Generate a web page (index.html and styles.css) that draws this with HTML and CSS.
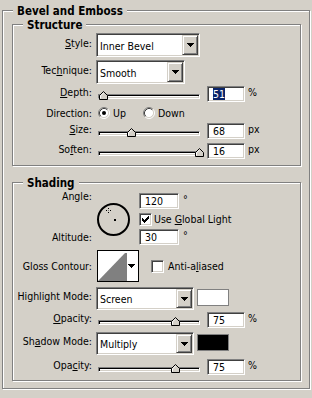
FILE: index.html
```html
<!DOCTYPE html>
<html>
<head>
<meta charset="utf-8">
<link rel="stylesheet" href="styles.css">
</head>
<body>
<div class="group outer">
  <div class="gtitle">Bevel and Emboss</div>

  <div class="group inner structure">
    <div class="gtitle">Structure</div>

    <div class="row r-style">
      <span class="lbl lbl-sel"><u>S</u>tyle:</span>
      <div class="select sel-style">
        <span class="val val-big">Inner Bevel</span>
        <span class="btn"><svg width="7" height="4" viewBox="0 0 7 4"><path d="M0 0h7v1H0zM1 1h5v1H1zM2 2h3v1H2zM3 3h1v1H3z"/></svg></span>
      </div>
    </div>

    <div class="row r-tech">
      <span class="lbl lbl-sel">Tec<u>h</u>nique:</span>
      <div class="select sel-tech">
        <span class="val val-big">Smooth</span>
        <span class="btn"><svg width="7" height="4" viewBox="0 0 7 4"><path d="M0 0h7v1H0zM1 1h5v1H1zM2 2h3v1H2zM3 3h1v1H3z"/></svg></span>
      </div>
    </div>

    <div class="row r-depth">
      <span class="lbl"><u>D</u>epth:</span>
      <div class="slider">
        <div class="track"></div>
        <svg class="thumb" style="left:1px" width="9" height="9" viewBox="0 0 9 9"><polygon points="0.5,8.5 0.5,4.5 4.5,0.5 8.5,4.5 8.5,8.5" fill="#d4d0c8" stroke="#000"/><polyline points="1.5,7.5 1.5,4.9 4.5,1.9" fill="none" stroke="#fff"/></svg>
      </div>
      <div class="num"><span class="hl">51</span></div>
      <span class="unit">%</span>
    </div>

    <div class="row r-dir">
      <span class="lbl">Direction:</span>
      <span class="radio-item ri-up">
        <svg width="12" height="12" viewBox="0 0 12 12"><circle cx="6" cy="6" r="4.5" fill="#fff"/><path d="M2.11 9.89A5.5 5.5 0 0 1 9.89 2.11" fill="none" stroke="#808080"/><path d="M9.89 2.11A5.5 5.5 0 0 1 2.11 9.89" fill="none" stroke="#fff"/><path d="M2.82 9.18A4.5 4.5 0 0 1 9.18 2.82" fill="none" stroke="#404040"/><path d="M9.18 2.82A4.5 4.5 0 0 1 2.82 9.18" fill="none" stroke="#d4d0c8"/><circle cx="6" cy="6" r="2" fill="#000"/></svg>
        <span>Up</span>
      </span>
      <span class="radio-item">
        <svg width="12" height="12" viewBox="0 0 12 12"><circle cx="6" cy="6" r="4.5" fill="#fff"/><path d="M2.11 9.89A5.5 5.5 0 0 1 9.89 2.11" fill="none" stroke="#808080"/><path d="M9.89 2.11A5.5 5.5 0 0 1 2.11 9.89" fill="none" stroke="#fff"/><path d="M2.82 9.18A4.5 4.5 0 0 1 9.18 2.82" fill="none" stroke="#404040"/><path d="M9.18 2.82A4.5 4.5 0 0 1 2.82 9.18" fill="none" stroke="#d4d0c8"/></svg>
        <span>Down</span>
      </span>
    </div>

    <div class="row r-size">
      <span class="lbl"><u>S</u>ize:</span>
      <div class="slider">
        <div class="track"></div>
        <svg class="thumb" style="left:29px" width="9" height="9" viewBox="0 0 9 9"><polygon points="0.5,8.5 0.5,4.5 4.5,0.5 8.5,4.5 8.5,8.5" fill="#d4d0c8" stroke="#000"/><polyline points="1.5,7.5 1.5,4.9 4.5,1.9" fill="none" stroke="#fff"/></svg>
      </div>
      <div class="num">68</div>
      <span class="unit">px</span>
    </div>

    <div class="row r-soften">
      <span class="lbl">So<u>f</u>ten:</span>
      <div class="slider">
        <div class="track"></div>
        <svg class="thumb" style="left:97px" width="9" height="9" viewBox="0 0 9 9"><polygon points="0.5,8.5 0.5,4.5 4.5,0.5 8.5,4.5 8.5,8.5" fill="#d4d0c8" stroke="#000"/><polyline points="1.5,7.5 1.5,4.9 4.5,1.9" fill="none" stroke="#fff"/></svg>
      </div>
      <div class="num">16</div>
      <span class="unit">px</span>
    </div>
  </div>

  <div class="group inner shading">
    <div class="gtitle">Shading</div>

    <div class="angle-grid">
      <span class="glbl angle-lbl">Angle:</span>
      <svg class="dial" width="33" height="33" viewBox="0 0 33 33">
        <circle cx="16.5" cy="16.5" r="15.5" fill="none" stroke="#000" stroke-width="2"/>
        <rect x="17" y="16" width="2" height="2" fill="#000"/>
        <rect x="9" y="7" width="1" height="1" fill="#000"/>
        <rect x="13" y="7" width="1" height="1" fill="#000"/>
        <rect x="11" y="5" width="1" height="1" fill="#000"/>
        <rect x="11" y="9" width="1" height="1" fill="#000"/>
        <rect x="11" y="7" width="1" height="1" fill="#808080"/>
      </svg>
      <div class="c3 c3-r1">
        <div class="num num-angle">120</div>
        <span class="deg">°</span>
      </div>
      <div class="c3 c3-r2">
        <span class="check"><svg width="7" height="7" viewBox="0 0 7 7"><path d="M0 2h1v3H0zM1 3h1v3H1zM2 4h1v3H2zM3 3h1v3H3zM4 2h1v3H4zM5 1h1v3H5zM6 0h1v3H6z"/></svg></span>
        <span class="ctext">Use <u>G</u>lobal Light</span>
      </div>
      <span class="glbl alt-lbl">Altitude:</span>
      <div class="c3 c3-r3">
        <div class="num num-angle">30</div>
        <span class="deg">°</span>
      </div>
    </div>

    <div class="row r-contour">
      <span class="lbl">Gloss Contour:</span>
      <svg class="contour" width="42" height="32" viewBox="0 0 42 32">
        <rect x="0.5" y="0.5" width="41" height="31" fill="#fff" stroke="#000"/>
        <polygon points="1,31 28,3 30,3 30,31" fill="#808080"/>
        <path transform="translate(31,14)" d="M0 0h7v1H0zM1 1h5v1H1zM2 2h3v1H2zM3 3h1v1H3z"/>
      </svg>
      <span class="check check-aa"></span>
      <span class="ctext aa-text">Anti-a<u>l</u>iased</span>
    </div>

    <div class="row r-high">
      <span class="lbl lbl-mode">Highlight Mode:</span>
      <div class="select sel-mode">
        <span class="val val-mode">Screen</span>
        <span class="btn"><svg width="7" height="4" viewBox="0 0 7 4"><path d="M0 0h7v1H0zM1 1h5v1H1zM2 2h3v1H2zM3 3h1v1H3z"/></svg></span>
      </div>
      <span class="swatch sw-white"></span>
    </div>

    <div class="row r-op1">
      <span class="lbl"><u>O</u>pacity:</span>
      <div class="slider">
        <div class="track"></div>
        <svg class="thumb" style="left:73px" width="9" height="9" viewBox="0 0 9 9"><polygon points="0.5,8.5 0.5,4.5 4.5,0.5 8.5,4.5 8.5,8.5" fill="#d4d0c8" stroke="#000"/><polyline points="1.5,7.5 1.5,4.9 4.5,1.9" fill="none" stroke="#fff"/></svg>
      </div>
      <div class="num">75</div>
      <span class="unit">%</span>
    </div>

    <div class="row r-shadow">
      <span class="lbl lbl-mode">Sh<u>a</u>dow Mode:</span>
      <div class="select sel-mode">
        <span class="val val-mode">Multiply</span>
        <span class="btn"><svg width="7" height="4" viewBox="0 0 7 4"><path d="M0 0h7v1H0zM1 1h5v1H1zM2 2h3v1H2zM3 3h1v1H3z"/></svg></span>
      </div>
      <span class="swatch sw-black"></span>
    </div>

    <div class="row r-op2">
      <span class="lbl">Opa<u>c</u>ity:</span>
      <div class="slider">
        <div class="track"></div>
        <svg class="thumb" style="left:73px" width="9" height="9" viewBox="0 0 9 9"><polygon points="0.5,8.5 0.5,4.5 4.5,0.5 8.5,4.5 8.5,8.5" fill="#d4d0c8" stroke="#000"/><polyline points="1.5,7.5 1.5,4.9 4.5,1.9" fill="none" stroke="#fff"/></svg>
      </div>
      <div class="num">75</div>
      <span class="unit">%</span>
    </div>
  </div>
</div>
</body>
</html>
```

FILE: styles.css
```css
* { box-sizing: border-box; }
html, body { margin: 0; padding: 0; background: #d4d0c8; }
body {
  width: 312px;
  height: 398px;
  overflow: hidden;
  font-family: "DejaVu Sans Condensed", "DejaVu Sans", "Liberation Sans", sans-serif;
  font-stretch: condensed;
  font-size: 10.5px;
  line-height: 13px;
  color: #000;
}
u { text-decoration: underline; text-underline-offset: 1px; }

.group {
  border: 1px solid #808080;
  box-shadow: inset 1px 1px 0 #fff, 1px 1px 0 #fff;
}
.outer {
  margin: 10px 0 0 2px;
  width: 308px;
  padding: 0 0 7px 9px;
}
.gtitle {
  width: fit-content;
  height: 13px;
  margin-top: -6px;
  padding: 0 4px;
  background: #d4d0c8;
  font-weight: bold;
  font-size: 11.5px;
  line-height: 13px;
  white-space: nowrap;
}
.outer > .gtitle { margin-left: 1px; }
.inner { width: 289px; }
.inner > .gtitle { margin-left: 10px; }
.structure { margin-top: 6px; padding-bottom: 6px; }
.shading { margin-top: 16px; padding-bottom: 5px; }

.row { display: flex; align-items: flex-start; }
.lbl {
  flex: none;
  width: 79px;
  margin-right: 4px;
  text-align: right;
  white-space: nowrap;
}
.lbl-sel { padding-top: 4px; }
.lbl-mode { padding-top: 3px; }

.r-style { margin-top: 1px; }
.r-tech { margin-top: 3px; }
.r-depth { margin-top: 2px; }
.r-dir { margin-top: 3px; height: 16px; align-items: center; }
.r-size { margin-top: 2px; }
.r-soften { margin-top: 4px; }

/* combo box */
.select {
  flex: none;
  display: flex;
  align-items: stretch;
  background: #fff;
  border: 1px solid;
  border-color: #808080 #fff #fff #808080;
  box-shadow: inset 1px 1px 0 #404040, inset -1px -1px 0 #d4d0c8;
  padding: 1px;
}
.sel-style { width: 104px; height: 24px; }
.sel-tech { width: 89px; height: 24px; }
.sel-mode { width: 98px; height: 23px; }
.val { flex: 1; padding-left: 2px; white-space: nowrap; }
.val-big { padding-top: 5px; }
.val-mode { padding-top: 4px; }
.btn {
  flex: none;
  width: 16px;
  display: flex;
  align-items: center;
  justify-content: center;
  background: #d4d0c8;
  border: 1px solid;
  border-color: #d4d0c8 #404040 #404040 #d4d0c8;
  box-shadow: inset 1px 1px 0 #fff, inset -1px -1px 0 #808080;
}
.btn svg { display: block; }

/* slider */
.slider {
  flex: none;
  position: relative;
  width: 102px;
  height: 9px;
  margin: 5px 0 0 2px;
}
.track {
  margin-top: 3px;
  height: 5px;
  background: #fff;
  border: 1px solid;
  border-color: #808080 #fff #fff #808080;
  box-shadow: inset 1px 1px 0 #000, inset -1px -1px 0 #d4d0c8;
}
.thumb { position: absolute; top: 0; display: block; }

/* edit box */
.num {
  flex: none;
  width: 38px;
  height: 16px;
  margin-left: 7px;
  padding: 1px 0 0 5px;
  line-height: 12px;
  background: #fff;
  border: 1px solid;
  border-color: #808080 #fff #fff #808080;
  box-shadow: inset 1px 1px 0 #404040, inset -1px -1px 0 #d4d0c8;
  white-space: nowrap;
}
.hl { display: inline-block; background: #0a246a; color: #fff; }
.unit { margin-left: 3px; }

/* radio */
.radio-item { display: flex; align-items: center; gap: 3px; }
.radio-item svg { display: block; }
.ri-up { margin-left: 2px; margin-right: 17px; }

/* angle block */
.angle-grid {
  display: grid;
  grid-template-columns: 79px 39px auto;
  grid-template-rows: 16px 16px 16px;
  column-gap: 4px;
  row-gap: 2px;
  margin-top: 3px;
}
.glbl { grid-column: 1; text-align: right; white-space: nowrap; }
.angle-lbl { grid-row: 1; align-self: start; margin-top: -3px; }
.alt-lbl { grid-row: 3; align-self: center; }
.dial { grid-column: 2; grid-row: 1 / 4; align-self: center; margin-left: 1px; display: block; }
.c3 { grid-column: 3; display: flex; align-items: flex-start; }
.c3-r1 { grid-row: 1; }
.c3-r2 { grid-row: 2; align-items: center; }
.c3-r3 { grid-row: 3; }
.num-angle { width: 40px; margin-left: 0; }
.deg { margin-left: 4px; }

.check {
  flex: none;
  width: 13px;
  height: 13px;
  display: flex;
  align-items: center;
  justify-content: center;
  background: #fff;
  border: 1px solid;
  border-color: #808080 #fff #fff #808080;
  box-shadow: inset 1px 1px 0 #404040, inset -1px -1px 0 #d4d0c8;
}
.check svg { display: block; }
.ctext { margin-left: 2px; white-space: nowrap; }

.r-contour { margin-top: 5px; height: 32px; align-items: center; }
.contour { display: block; margin-left: 1px; flex: none; }
.check-aa { margin-left: 12px; }
.aa-text { margin-left: 4px; }

.r-high { margin-top: 5px; }
.r-op1 { margin-top: 2px; }
.r-shadow { margin-top: 4px; }
.r-op2 { margin-top: 4px; }

.swatch {
  flex: none;
  width: 32px;
  height: 17px;
  margin: 2px 0 0 3px;
  border: 1px solid #808080;
}
.sw-white { background: #fff; }
.sw-black { background: #000; }
```
